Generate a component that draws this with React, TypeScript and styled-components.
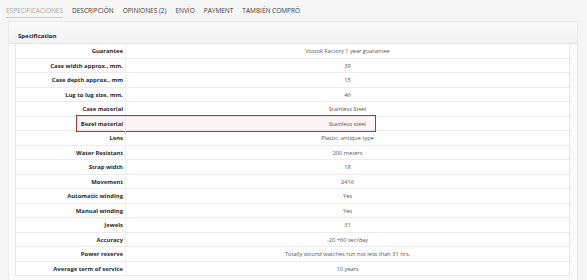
import styled, { createGlobalStyle } from 'styled-components';

const GlobalStyle = createGlobalStyle`
  html, body {
    margin: 0;
    padding: 0;
    background: #f6f6f6;
    font-family: "Open Sans", "Liberation Sans", sans-serif;
  }
`;

const Page = styled.div`
  width: 587px;
  height: 280px;
  overflow: hidden;
`;

const Tabs = styled.ul`
  display: flex;
  gap: 9px;
  list-style: none;
  margin: 0;
  padding: 6px 0 0 6px;
  height: 15px;
`;

const Tab = styled.li<{ $active?: boolean }>`
  font-size: 6.5px;
  text-transform: uppercase;
  color: ${(p) => (p.$active ? '#a8a8a8' : '#3a3a3a')};
  padding-bottom: 2px;
  height: 9px;
  line-height: 9px;
  border-bottom: 1px solid ${(p) => (p.$active ? '#c8c8c8' : 'transparent')};
`;

const Panel = styled.section`
  margin: 0 9px 0 8px;
  border: 1px solid #ebebeb;
  border-bottom: none;
  background: #fbfbfb;
  height: 270px;
`;

const PanelHeader = styled.h3`
  margin: 0;
  height: 21px;
  line-height: 28px;
  padding-left: 9px;
  font-size: 6px;
  font-weight: 700;
  color: #222;
  background: linear-gradient(#fafafa, #f3f3f3);
  border-bottom: 1px solid #e6e6e6;
`;

const Table = styled.div`
  margin: 0 7px 0 6px;
  border-left: 1px solid #e8e8e8;
  border-right: 1px solid #e4e4e4;
  background: #fff;
`;

const Row = styled.div<{ $marked?: boolean }>`
  position: relative;
  display: grid;
  grid-template-columns: 110px 1fr;
  height: 14.5px;
  border-bottom: 1px solid #ececec;
  box-sizing: border-box;

  ${(p) =>
    p.$marked &&
    `
    &::after {
      content: '';
      position: absolute;
      left: 60px;
      width: 300px;
      top: -2px;
      height: 17px;
      box-sizing: border-box;
      border: 1.6px solid #b3333b;
      background: rgba(200, 60, 60, 0.05);
      pointer-events: none;
    }
  `}
`;

const Label = styled.div`
  text-align: right;
  padding-right: 2px;
  font-size: 5.9px;
  font-weight: 700;
  color: #2a2a2a;
  line-height: 14px;
  border-right: 1px solid #f0f0f0;
  white-space: nowrap;
`;

const Value = styled.div`
  text-align: center;
  font-size: 5.65px;
  color: #555;
  line-height: 14px;
  white-space: nowrap;
`;

const tabs = ['Especificaciones', 'Descripción', 'Opiniones (2)', 'Envío', 'Payment', 'También compró'];

const specs: [string, string][] = [
  ['Guarantee', 'Vostok Factory 1 year guarantee'],
  ['Case width approx., mm.', '39'],
  ['Case depth approx., mm', '15'],
  ['Lug to lug size, mm.', '46'],
  ['Case material', 'Stainless Steel'],
  ['Bezel material', 'Stainless steel'],
  ['Lens', 'Plastic, antique type'],
  ['Water Resistant', '200 meters'],
  ['Strap width', '18'],
  ['Movement', '2416'],
  ['Automatic winding', 'Yes'],
  ['Manual winding', 'Yes'],
  ['Jewels', '31'],
  ['Accuracy', '-20 +60 sec/day'],
  ['Power reserve', 'Totally wound watches run not less than 31 hrs.'],
  ['Average term of service', '10 years'],
];

export default function App() {
  return (
    <Page>
      <GlobalStyle />
      <Tabs>
        {tabs.map((t, i) => (
          <Tab key={t} $active={i === 0}>
            {t}
          </Tab>
        ))}
      </Tabs>
      <Panel>
        <PanelHeader>Specification</PanelHeader>
        <Table>
          {specs.map(([k, v]) => (
            <Row key={k} $marked={k === 'Bezel material'}>
              <Label>{k}</Label>
              <Value>{v}</Value>
            </Row>
          ))}
        </Table>
      </Panel>
    </Page>
  );
}
